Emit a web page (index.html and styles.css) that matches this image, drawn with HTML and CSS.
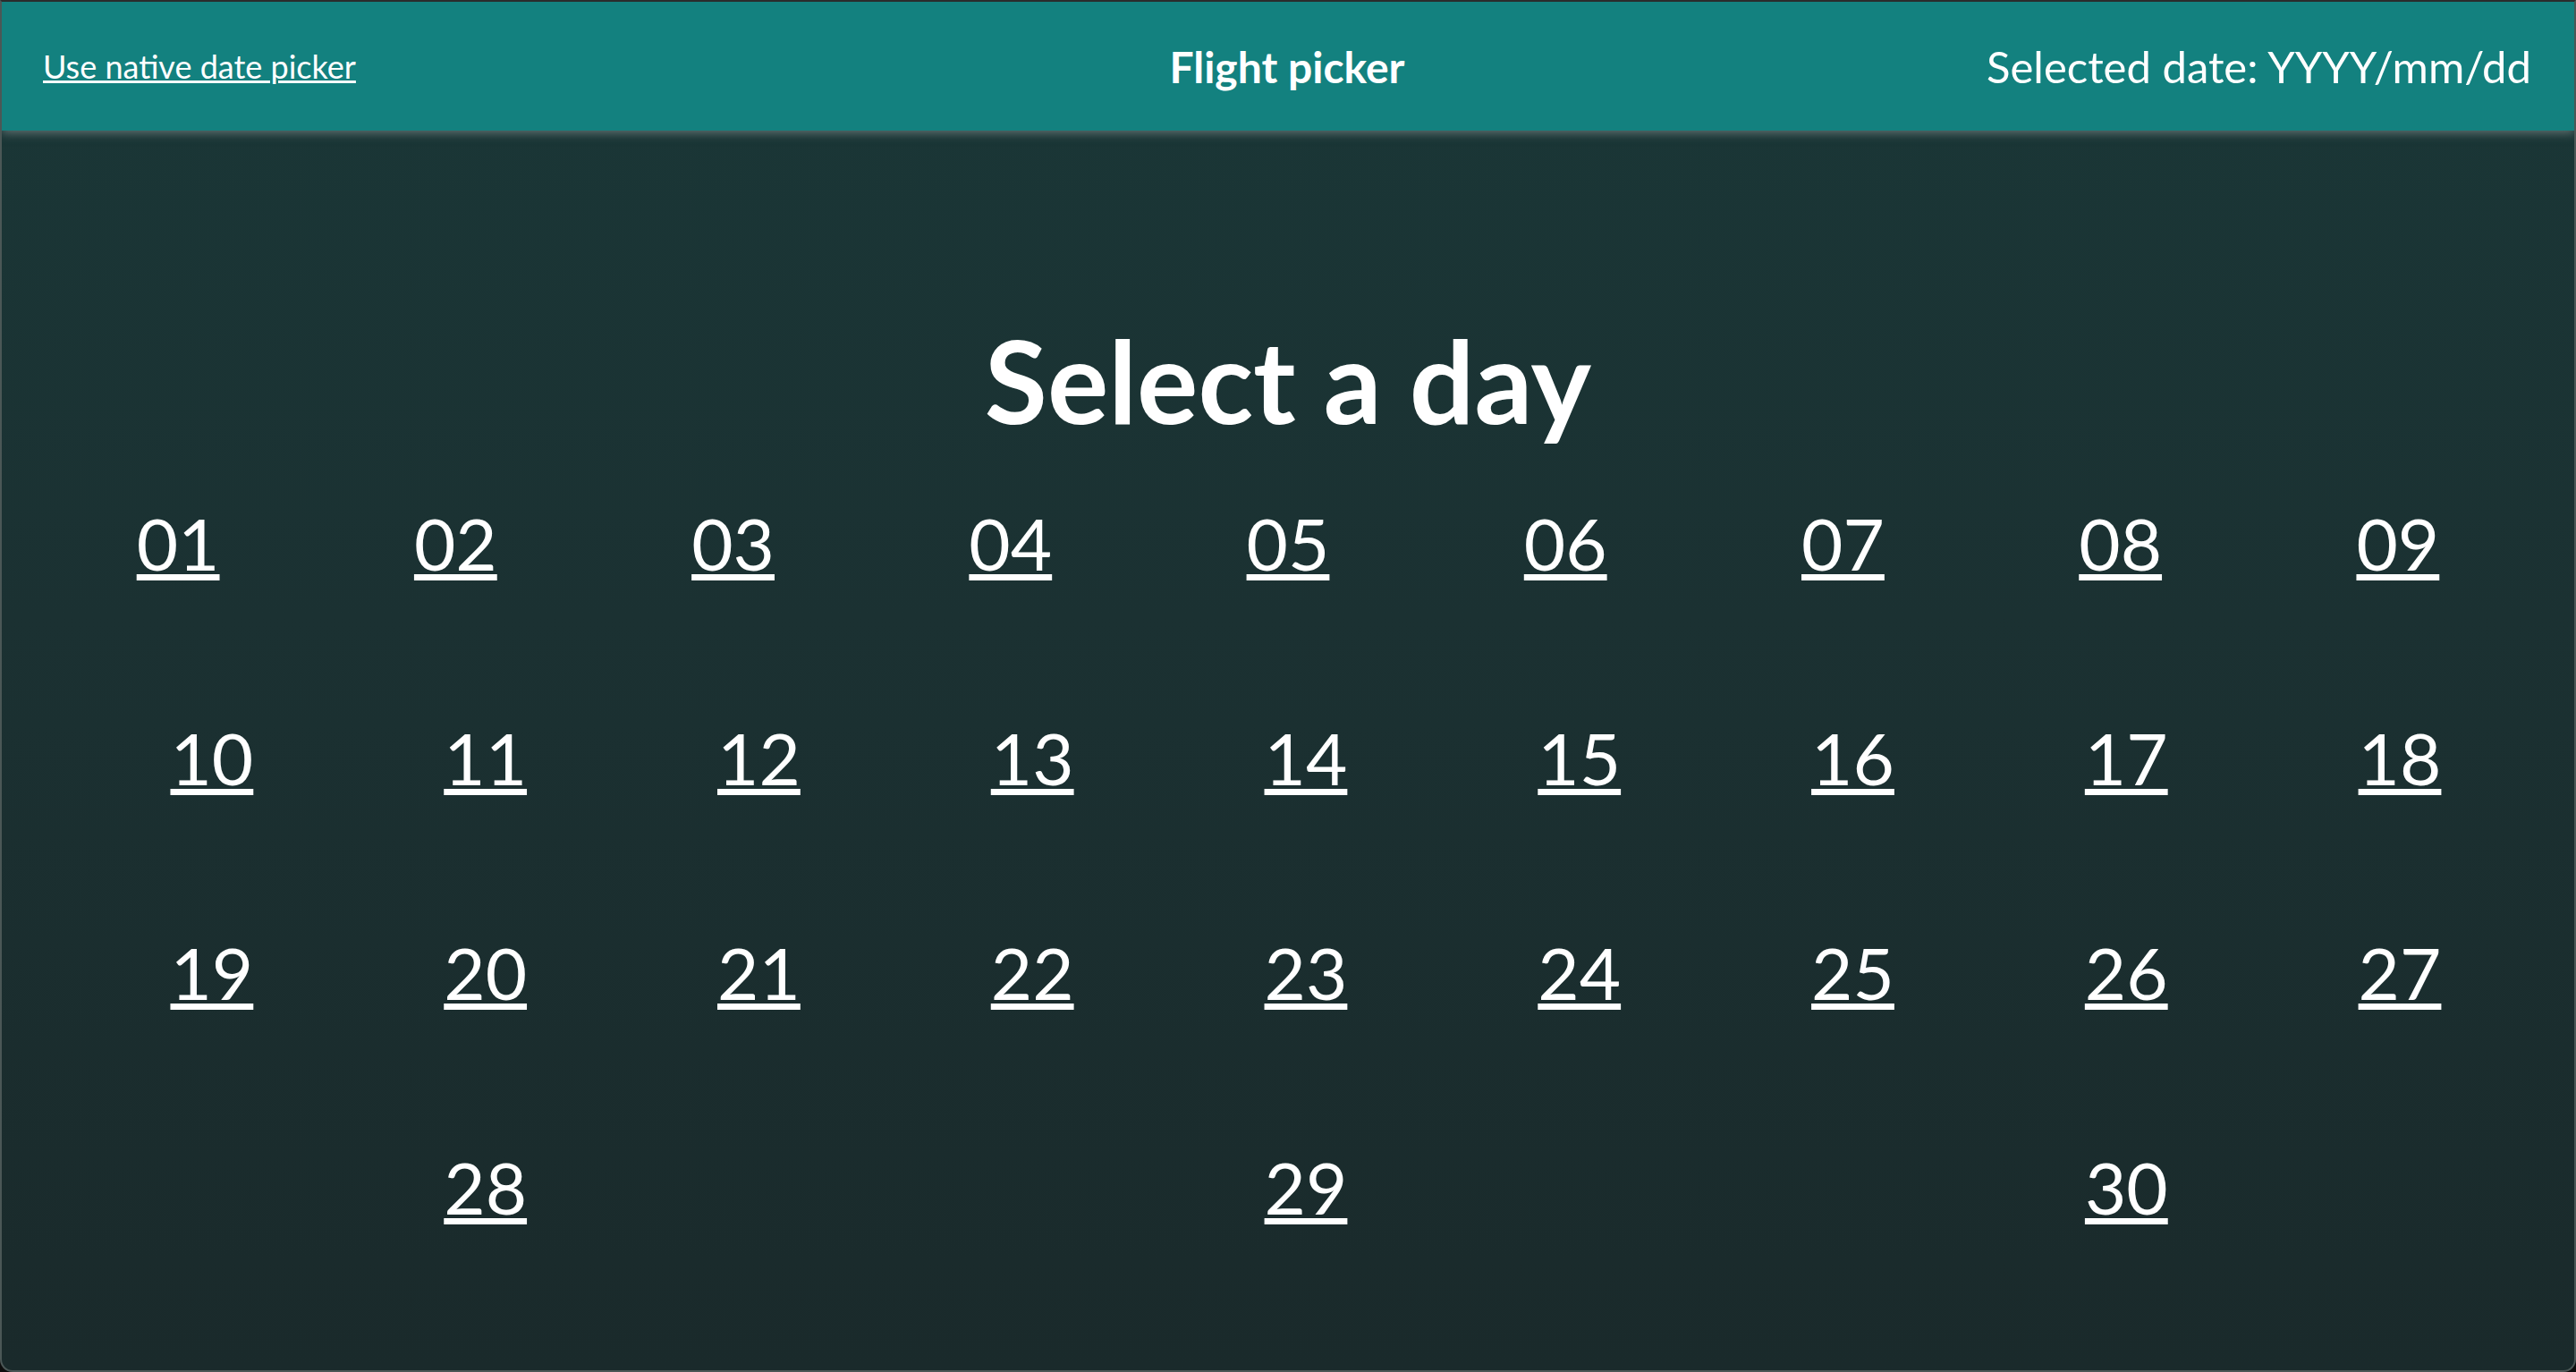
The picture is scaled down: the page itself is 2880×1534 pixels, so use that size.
FILE: index.html
```html
<!DOCTYPE html>
<html lang="en">
<head>
<meta charset="utf-8">
<title>Flight picker</title>
<link rel="stylesheet" href="styles.css">
</head>
<body>
<div class="window">
  <header class="topbar">
    <a class="native-link" href="#">Use native date picker</a>
    <h1 class="app-title">Flight picker</h1>
    <div class="selected">Selected date: YYYY/mm/dd</div>
  </header>
  <main class="content">
    <h2 class="heading">Select a day</h2>
    <div class="days days-first">
      <a class="day" href="#">01</a>
      <a class="day" href="#">02</a>
      <a class="day" href="#">03</a>
      <a class="day" href="#">04</a>
      <a class="day" href="#">05</a>
      <a class="day" href="#">06</a>
      <a class="day" href="#">07</a>
      <a class="day" href="#">08</a>
      <a class="day" href="#">09</a>
    </div>
    <div class="days days-rest">
      <div class="day-row">
        <a class="day" href="#">10</a>
        <a class="day" href="#">11</a>
        <a class="day" href="#">12</a>
        <a class="day" href="#">13</a>
        <a class="day" href="#">14</a>
        <a class="day" href="#">15</a>
        <a class="day" href="#">16</a>
        <a class="day" href="#">17</a>
        <a class="day" href="#">18</a>
      </div>
      <div class="day-row">
        <a class="day" href="#">19</a>
        <a class="day" href="#">20</a>
        <a class="day" href="#">21</a>
        <a class="day" href="#">22</a>
        <a class="day" href="#">23</a>
        <a class="day" href="#">24</a>
        <a class="day" href="#">25</a>
        <a class="day" href="#">26</a>
        <a class="day" href="#">27</a>
      </div>
      <div class="day-row">
        <a class="day" href="#">28</a>
        <a class="day" href="#">29</a>
        <a class="day" href="#">30</a>
      </div>
    </div>
  </main>
</div>
</body>
</html>
```
FILE: styles.css
```css
html, body {
  margin: 0;
  padding: 0;
  background: #0e0e0e;
}

body {
  font-family: Lato, "Noto Sans", sans-serif;
  color: #ffffff;
}

.window {
  box-sizing: border-box;
  width: 2880px;
  height: 1534px;
  border-top: 2px solid #2a2c2c;
  border-left: 2px solid #4b5756;
  border-right: 2px solid #4b5756;
  border-bottom: 2px solid #4b5756;
  border-radius: 0 0 14px 14px;
  overflow: hidden;
  display: flex;
  flex-direction: column;
  background: linear-gradient(180deg, #1a3737 0%, #1b3132 45%, #1a2a2b 100%);
}

.topbar {
  position: relative;
  z-index: 1;
  height: 144px;
  flex: 0 0 auto;
  box-sizing: border-box;
  padding: 0 48px 0 46px;
  display: grid;
  grid-template-columns: 1fr auto 1fr;
  align-items: center;
  background: #13817f;
  box-shadow: 0 3px 10px rgba(150, 160, 160, 0.55);
}

.native-link {
  justify-self: start;
  color: #ffffff;
  font-size: 36px;
  text-decoration: underline;
  text-decoration-thickness: 3px;
  text-underline-offset: 2px;
}

.app-title {
  margin: 0;
  font-size: 48px;
  font-weight: 700;
}

.selected {
  justify-self: end;
  font-size: 49px;
}

.content {
  flex: 1 1 auto;
  display: flex;
  flex-direction: column;
  padding-top: 200px;
}

.heading {
  margin: 0 0 55px 0;
  text-align: center;
  font-size: 128px;
  font-weight: 700;
  line-height: 158px;
}

.days {
  display: flex;
}

.days-first {
  justify-content: space-around;
  margin: 0 42px 0 42px;
}

.days-rest {
  flex-direction: column;
  margin: 144px 42px 0 82px;
  gap: 144px;
}

.day-row {
  display: flex;
  justify-content: space-around;
}

.day {
  color: #ffffff;
  font-size: 80px;
  line-height: 96px;
  text-decoration: underline;
  text-decoration-thickness: 7px;
  text-underline-offset: 4px;
}
```
